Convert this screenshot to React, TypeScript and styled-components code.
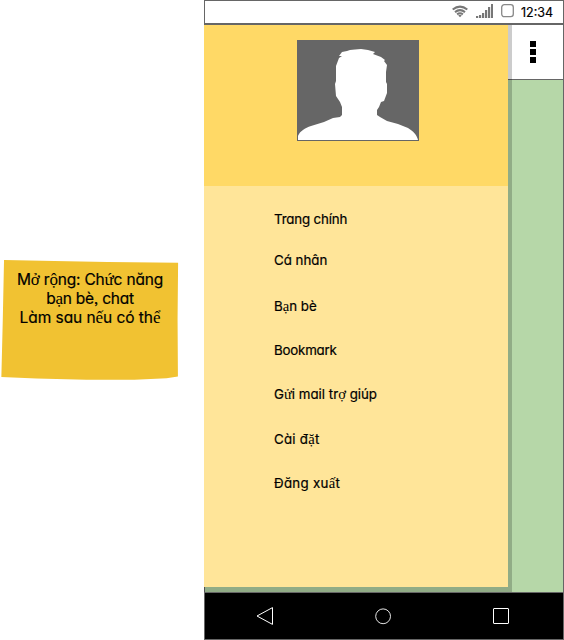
import React from "react";
import styled, { createGlobalStyle } from "styled-components";

const GlobalStyle = createGlobalStyle`
  * { box-sizing: border-box; }
  body { margin: 0; background: #fff; overflow: hidden; }
`;

const Page = styled.main`
  display: flex;
  width: 564px;
  height: 640px;
  background: #fff;
  color: #000;
  font-family: "Inter", "Liberation Sans", sans-serif;
  font-feature-settings: "cv11" 1, "ss03" 1;
  -webkit-text-stroke: 0.2px #000;
`;

const NoteColumn = styled.aside`
  width: 204px;
  flex: none;
  padding: 259px 0 0 1px;
`;

const StickyNote = styled.div`
  width: 178px;
  height: 121px;
  padding: 11px 0 0;
  background: #f1c232;
  clip-path: polygon(1.7% 0.8%, 30% 1.7%, 60% 2.5%, 99.5% 3%, 99.2% 50%, 99.4% 97.2%, 93% 98.6%, 75% 99.8%, 48% 99.8%, 20% 98.7%, 0.2% 97.5%, 1% 50%);
`;

const NoteLine = styled.p<{ $tracking: number }>`
  margin: 0;
  height: 19px;
  line-height: 19px;
  font-size: 15.5px;
  text-align: center;
  white-space: nowrap;
  letter-spacing: ${(p) => p.$tracking}px;
`;

const SerifGlyph = styled.span`
  font-family: "Liberation Serif", serif;
  font-size: 1.1em;
  line-height: 1;
  -webkit-text-stroke: 0;
`;

const Phone = styled.section`
  position: relative;
  display: flex;
  flex-direction: column;
  width: 360px;
  height: 640px;
  border: 1px solid #666;
`;

const StatusBar = styled.header`
  display: flex;
  align-items: center;
  justify-content: flex-end;
  height: 24px;
  flex: none;
  padding: 0 9px 2px 0;
  border-bottom: 2px solid #666;
`;

const StatusIcon = styled.svg<{ $gap: number }>`
  display: block;
  flex: none;
  margin-right: ${(p) => p.$gap}px;
`;

const Clock = styled.time`
  width: 33px;
  font-size: 12.5px;
  line-height: 20px;
  padding-top: 3px;
  white-space: nowrap;
  -webkit-text-stroke: 0.2px #000;
`;

const TitleBar = styled.div`
  display: flex;
  align-items: center;
  justify-content: flex-end;
  height: 55px;
  flex: none;
  padding-right: 27px;
  border-bottom: 1px solid #666;
`;

const MoreButton = styled.button`
  display: grid;
  gap: 2px;
  padding: 0;
  border: 0;
  background: none;
`;

const Dot = styled.span`
  width: 6px;
  height: 6px;
  background: #000;
`;

const Content = styled.div`
  flex: 1;
  background: #b6d7a8;
`;

const DrawerShade = styled.div`
  position: absolute;
  top: 24px;
  left: -1px;
  padding: 0 4px 5px 0;
  background: rgba(0, 0, 0, 0.2);
`;

const Drawer = styled.nav`
  width: 304px;
  height: 562px;
  background: #ffe599;
`;

const Profile = styled.div`
  display: flex;
  justify-content: center;
  height: 161px;
  padding: 15px 0 0 4px;
  background: #ffd966;
`;

const Avatar = styled.svg`
  display: block;
  width: 122px;
  height: 101px;
`;

const Menu = styled.ul`
  list-style: none;
  margin: 0;
  padding: 23px 0 0 70px;
`;

const MenuItem = styled.li<{ $after: number; $tracking: number }>`
  height: 20px;
  margin-bottom: ${(p) => p.$after}px;
  font-size: 13.3px;
  line-height: 20px;
  white-space: nowrap;
  letter-spacing: ${(p) => p.$tracking}px;
`;

const NavBar = styled.footer`
  display: flex;
  align-items: center;
  height: 47px;
  flex: none;
  padding-left: 51px;
  gap: 101px;
  background: #000;
  border-top: 1px solid #666;
`;

const NavIcon = styled.svg`
  display: block;
  width: 17px;
  height: 18px;
  fill: none;
  stroke: #fff;
`;

// Letters with stacked or horned marks are set in the serif face.
const serifLetters = /([ởộứạếểửợặấ])/;

function Mixed({ text }: { text: string }) {
  return (
    <>
      {text.split(serifLetters).map((part, i) =>
        serifLetters.test(part) ? <SerifGlyph key={i}>{part}</SerifGlyph> : part
      )}
    </>
  );
}

const noteLines = [
  { text: "Mở rộng: Chức năng", tracking: -0.2 },
  { text: "bạn bè, chat", tracking: -0.25 },
  { text: "Làm sau nếu có thể", tracking: -0.06 },
];

const menuItems = [
  { text: "Trang chính", after: 21, tracking: -0.15 },
  { text: "Cá nhân", after: 26, tracking: 0 },
  { text: "Bạn bè", after: 24, tracking: 0 },
  { text: "Bookmark", after: 24, tracking: -0.2 },
  { text: "Gửi mail trợ giúp", after: 25, tracking: 0 },
  { text: "Cài đặt", after: 24, tracking: 0.25 },
  { text: "Đăng xuất", after: 0, tracking: 0.3 },
];

export default function App() {
  return (
    <Page>
      <GlobalStyle />
      <NoteColumn>
        <StickyNote>
          {noteLines.map((l) => (
            <NoteLine key={l.text} $tracking={l.tracking}><Mixed text={l.text} /></NoteLine>
          ))}
        </StickyNote>
      </NoteColumn>
      <Phone>
        <StatusBar>
          <StatusIcon $gap={8} width="16" height="14" viewBox="0 0 16 14" fill="none" stroke="#777" strokeWidth="2">
            <path d="M.7 5.6Q8-.4 15.3 5.6M3 8.1Q8 4.1 13 8.1M5.1 10.4Q8 8.1 10.9 10.4" />
            <path d="M6.2 11.4Q8 10.2 9.8 11.4L8 13.2z" fill="#777" stroke="none" />
          </StatusIcon>
          <StatusIcon $gap={8} width="17" height="14" viewBox="0 0 17 14" fill="#777">
            <path d="M0 12h2.2v2H0zM3 11h2.2v3H3zM6 9h2.2v5H6zM9 6h2.2v8H9zM12 3h2.2v11H12zM15 0h2v14h-2z" />
          </StatusIcon>
          <StatusIcon $gap={7} width="13" height="14" viewBox="0 0 13 14" fill="none" stroke="#888" strokeWidth="1.3">
            <rect x=".7" y=".7" width="11.6" height="12" rx="2.6" />
          </StatusIcon>
          <Clock>12:34</Clock>
        </StatusBar>
        <TitleBar>
          <MoreButton aria-label="More"><Dot /><Dot /><Dot /></MoreButton>
        </TitleBar>
        <Content />
        <NavBar>
          <NavIcon viewBox="0 0 17 18"><path d="M1 9 16.5.6v16.8z" /></NavIcon>
          <NavIcon viewBox="0 0 17 18"><circle cx="9.1" cy="9.3" r="7.4" strokeWidth=".9" /></NavIcon>
          <NavIcon viewBox="0 0 17 18"><rect x="1.5" y="1.5" width="15" height="15" rx=".5" /></NavIcon>
        </NavBar>
        <DrawerShade>
          <Drawer>
            <Profile>
              <Avatar viewBox="0 0 122 101">
                <path fill="#666" d="M0 0h122v101H0z" />
                <path fill="#fff" d="M1 100V96C3 91 8 88 14 86L27 82 36 78 43 77 45 75V67L43 62 39 56 38 44 39 41V26L42 18 45 16 42 16 45 12 50 11 53 10 58 9.5 64 9 71 10 78 12 76 14 84 17 88 20 87 21 90 25 89 32 89 42 90 44V53L87 61 84 62 82 67 80 70V75L83 77 90 81 101 84 111 88C116 91 120 95 121 100z" />
              </Avatar>
            </Profile>
            <Menu>
              {menuItems.map((m) => (
                <MenuItem key={m.text} $after={m.after} $tracking={m.tracking}><Mixed text={m.text} /></MenuItem>
              ))}
            </Menu>
          </Drawer>
        </DrawerShade>
      </Phone>
    </Page>
  );
}
